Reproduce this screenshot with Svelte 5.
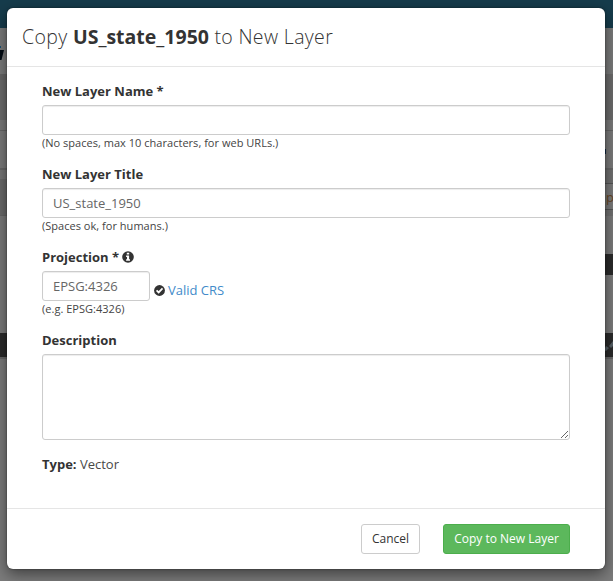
<script>
  let name = $state('');
  let title = $state('US_state_1950');
  let projection = $state('EPSG:4326');
  let description = $state('');

  // [height, colour] bands of the dimmed page on each side of the dialog
  const left = [
    [28, '#163c4c'], [46, '#7a7b7b'], [6, '#666'], [40, '#6c6c6c'], [10, '#7b7b7b'], [1, '#666'],
    [37, '#7b7b7b'], [2, '#686868'], [9, '#777'], [36, '#6b6b6b'], [1, '#666'], [117, '#7b7b7b'],
    [24, '#2b2b2b'], [2, '#696969'], [222, '#7c7c7c']
  ];
  const right = [
    [28, '#163c4c'], [46, '#7a7b7b'], [46, '#6c6c6c'], [10, '#7b7b7b'], [1, '#666'],
    [37, '#7b7b7b'], [2, '#686868'], [13, '#717171'], [1, '#555'], [25, '#7b7b7b'], [1, '#555'],
    [6, '#717171'], [38, '#7b7b7b'], [21, '#2b2b2b'], [58, '#7c7c7c'], [24, '#2b2b2b'],
    [2, '#696969'], [222, '#7c7c7c']
  ];
</script>

{#snippet bands(list)}
  <div class="side">
    {#each list as [h, c]}
      <div style="height:{h}px;background:{c}"></div>
    {/each}
  </div>
{/snippet}

<div class="screen">
  <div class="page" aria-hidden="true">
    {@render bands(left)}
    {@render bands(right)}
    <svg class="bits" width="613" height="581">
      <path d="M0 50h4l-2.5 10H0z" fill="#000a12" />
      <path d="M0 46h1v2H0z" fill="#175074" />
      <path d="M603 149h3v5h-3z" fill="#102a4a" />
      <text x="606" y="202" font-size="13" fill="#674626">p</text>
      <path d="M604 350l2-4 3 2-3 3zM609 346l4-5v5l-2 2z" fill="#566066" />
    </svg>
  </div>

  <div class="modal" role="dialog" aria-modal="true">
    <header>
      <h4>Copy <strong>US_state_1950</strong> to New Layer</h4>
    </header>

    <main>
      <div class="group">
        <label for="name">New Layer Name *</label>
        <input id="name" type="text" bind:value={name} />
        <small>(No spaces, max 10 characters, for web URLs.)</small>
      </div>
      <div class="group">
        <label for="title">New Layer Title</label>
        <input id="title" type="text" bind:value={title} />
        <small>(Spaces ok, for humans.)</small>
      </div>
      <div class="group">
        <label for="crs">Projection *
          <svg class="info" width="12" height="12" viewBox="0 0 12 12">
            <circle cx="6" cy="6" r="5.8" fill="#333" />
            <path d="M4.8 1.8h2.4v1.7H4.8zM4.1 4.6h3v3.7h.9v1.5H4.1V8.3H5V6.1h-.9z" fill="#fff" />
          </svg>
        </label>
        <div class="row">
          <input id="crs" class="short" type="text" bind:value={projection} />
          <span class="valid">
            <svg width="11" height="11" viewBox="0 0 12 12">
              <circle cx="6" cy="6" r="5.9" fill="#333" />
              <path d="M2.8 5.8l2.3 2.3 4.2-4.3" fill="none" stroke="#fff" stroke-width="1.9" />
            </svg>
            <a href="#crs">Valid CRS</a>
          </span>
        </div>
        <small>(e.g. EPSG:4326)</small>
      </div>
      <div class="group">
        <label for="desc">Description</label>
        <textarea id="desc" bind:value={description}></textarea>
      </div>
      <p><strong>Type:</strong> <span>Vector</span></p>
    </main>

    <footer>
      <button>Cancel</button>
      <button class="primary">Copy to New Layer</button>
    </footer>
  </div>
</div>

<style>
  .screen {
    position: relative;
    box-sizing: border-box;
    width: 613px;
    height: 581px;
    padding: 8px 8px 12px 7px;
    overflow: hidden;
    font: 400 13px/18px 'Open Sans', sans-serif;
    color: #333;
  }
  .page {
    position: absolute;
    inset: 0;
    display: flex;
  }
  .side { flex: 1; }
  .bits { position: absolute; inset: 0; }
  .modal {
    position: relative;
    box-sizing: border-box;
    height: 561px;
    display: flex;
    flex-direction: column;
    background: #fff;
    border-radius: 6px;
    box-shadow: 0 5px 15px rgba(0, 0, 0, 0.5), 0 0 2px rgba(0, 0, 0, 0.5);
  }
  header {
    box-sizing: border-box;
    height: 59px;
    padding: 15px;
    border-bottom: 1px solid #e5e5e5;
  }
  h4 {
    margin: 0;
    font-size: 19.5px;
    line-height: 27px;
    font-weight: 300;
    letter-spacing: 0.35px;
  }
  strong { font-weight: 700; letter-spacing: 0; }
  main {
    flex: 1;
    padding: 15px 35px 0;
  }
  .group { height: 83px; }
  .group:last-of-type { height: 115px; }
  label {
    display: flex;
    align-items: center;
    gap: 3px;
    height: 18px;
    margin-bottom: 5px;
    font-weight: 700;
  }
  input, textarea {
    display: block;
    box-sizing: border-box;
    width: 100%;
    height: 30px;
    margin: 0;
    padding: 5px 10px;
    border: 1px solid #ccc;
    border-radius: 3px;
    background: #fff;
    box-shadow: inset 0 1px 1px rgba(0, 0, 0, 0.075);
    font: 400 13px/18px 'Open Sans', sans-serif;
    color: #666;
    outline: none;
  }
  textarea { height: 86px; resize: vertical; }
  .short { width: 108px; }
  .row { display: flex; }
  .valid {
    display: flex;
    align-items: center;
    gap: 3.5px;
    height: 18px;
    margin: 10px 0 0 3.5px;
  }
  a { color: #428bca; text-decoration: none; }
  small {
    display: block;
    font-size: 11px;
    line-height: 16px;
    letter-spacing: 0.025px;
    color: #444;
  }
  p { margin: 0; padding-top: 9px; }
  p span { color: #484848; }
  footer {
    box-sizing: border-box;
    height: 61px;
    display: flex;
    justify-content: flex-end;
    gap: 23px;
    padding: 15px 35px 0;
    border-top: 1px solid #e5e5e5;
  }
  button {
    box-sizing: border-box;
    width: 59px;
    height: 30px;
    padding: 0;
    border: 1px solid #ccc;
    border-radius: 3px;
    background: #fff;
    font: 400 12px/18px 'Open Sans', sans-serif;
    color: #333;
    white-space: nowrap;
  }
  .primary {
    width: 127px;
    border-color: #4cae4c;
    background: #5cb85c;
    color: #fff;
  }
</style>
